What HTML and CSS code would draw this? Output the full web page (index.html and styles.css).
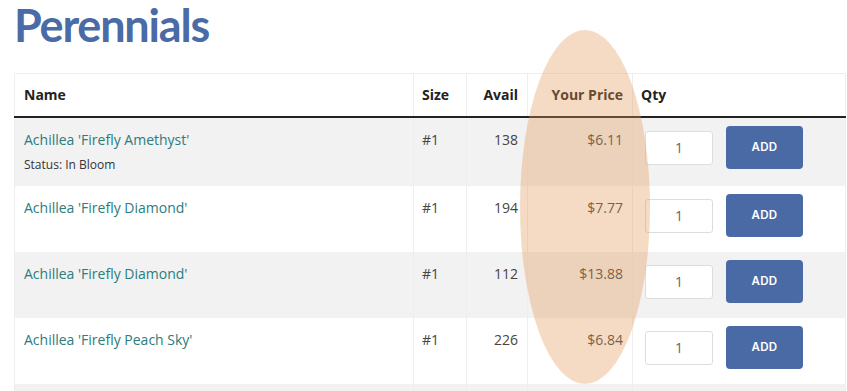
FILE: index.html
```html
<!DOCTYPE html>
<html>
<head>
<meta charset="utf-8">
<link rel="stylesheet" href="styles.css">
</head>
<body>
<div class="page">
  <h1 class="title">Perennials</h1>
  <div class="table-wrap">
    <table class="products">
      <colgroup>
        <col class="w-name">
        <col class="w-size">
        <col class="w-avail">
        <col class="w-price">
        <col class="w-qty">
      </colgroup>
      <thead>
        <tr>
          <th>Name</th>
          <th class="c-size">Size</th>
          <th class="num">Avail</th>
          <th class="num">Your Price</th>
          <th class="c-qty">Qty</th>
        </tr>
      </thead>
      <tbody>
        <tr class="first">
          <td><a href="#" class="plant">Achillea 'Firefly Amethyst'</a><div class="status">Status: In Bloom</div></td>
          <td class="c-size">#1</td>
          <td class="num">138</td>
          <td class="num">$6.11</td>
          <td class="qty"><div class="qty-box"><input class="qty-input" type="text" value="1"><button class="add">ADD</button></div></td>
        </tr>
        <tr>
          <td><a href="#" class="plant">Achillea 'Firefly Diamond'</a></td>
          <td class="c-size">#1</td>
          <td class="num">194</td>
          <td class="num">$7.77</td>
          <td class="qty"><div class="qty-box"><input class="qty-input" type="text" value="1"><button class="add">ADD</button></div></td>
        </tr>
        <tr>
          <td><a href="#" class="plant">Achillea 'Firefly Diamond'</a></td>
          <td class="c-size">#1</td>
          <td class="num">112</td>
          <td class="num">$13.88</td>
          <td class="qty"><div class="qty-box"><input class="qty-input" type="text" value="1"><button class="add">ADD</button></div></td>
        </tr>
        <tr>
          <td><a href="#" class="plant">Achillea 'Firefly Peach Sky'</a></td>
          <td class="c-size">#1</td>
          <td class="num">226</td>
          <td class="num">$6.84</td>
          <td class="qty"><div class="qty-box"><input class="qty-input" type="text" value="1"><button class="add">ADD</button></div></td>
        </tr>
        <tr class="last">
          <td></td>
          <td></td>
          <td></td>
          <td></td>
          <td></td>
        </tr>
      </tbody>
    </table>
    <div class="highlight"></div>
  </div>
</div>
</body>
</html>
```
FILE: styles.css
```css
html, body {
  margin: 0;
  padding: 0;
  background: #fff;
  overflow: hidden;
}
.page {
  padding: 0 2px 0 14px;
  font-family: "Open Sans", "Liberation Sans", sans-serif;
  color: #333;
}
.title {
  margin: 0;
  height: 71px;
  padding-top: 2px;
  font-family: Lato, "Open Sans", sans-serif;
  font-weight: 700;
  font-size: 45px;
  line-height: 46px;
  letter-spacing: -1.2px;
  color: #4a6ba6;
}
.table-wrap {
  position: relative;
}
.products {
  width: 831px;
  table-layout: fixed;
  border-collapse: collapse;
  font-size: 14px;
  background: #fff;
}
.w-name { width: 399px; }
.w-size { width: 53px; }
.w-avail { width: 61px; }
.w-price { width: 105px; }
.w-qty { width: 213px; }
.products th {
  height: 43px;
  box-sizing: border-box;
  padding: 0 9px;
  text-align: left;
  font-weight: 700;
  font-size: 14px;
  color: #222;
  white-space: nowrap;
  border-top: 1px solid #eee;
  border-left: 1px solid #eee;
  border-right: 1px solid #eee;
  border-bottom: 2px solid #222;
}
.products th.num { text-align: right; }
.products th.c-size { padding-left: 8px; }
.products th.c-qty { padding-left: 8px; }
.products td {
  vertical-align: top;
  padding: 12px 9px 0;
  line-height: 20px;
  color: #444;
  white-space: nowrap;
  border-left: 1px solid #eee;
  border-right: 1px solid #eee;
}
.products td.c-size { padding-left: 8px; }
.products tbody tr { height: 66px; }
.products tbody tr.first { height: 69px; }
.products tbody tr.last { height: 10px; }
.products tbody tr:nth-child(odd) td { background: #f2f2f2; }
.products td.num { text-align: right; }
.plant {
  color: #2b7c7c;
  text-decoration: none;
}
.status {
  font-size: 12px;
  line-height: 18px;
  margin-top: 6px;
  color: #333;
}
.products td.qty {
  padding: 8px 12px 0;
}
.qty-box {
  display: flex;
  align-items: flex-start;
  gap: 13px;
}
.qty-input {
  box-sizing: border-box;
  width: 68px;
  height: 34px;
  margin-top: 5px;
  border: 1px solid #ddd;
  border-radius: 3px;
  text-align: center;
  font-family: "Open Sans", sans-serif;
  font-size: 14px;
  color: #666;
  -webkit-text-fill-color: #666;
  background: #fff;
  padding: 0;
  outline: none;
}
.add {
  width: 77px;
  height: 43px;
  border: 0;
  border-radius: 4px;
  background: #4a6aa5;
  color: #fff;
  font-family: Inter, "DejaVu Sans", sans-serif;
  font-weight: 600;
  font-size: 11.5px;
  letter-spacing: 0.3px;
  cursor: pointer;
}
.highlight {
  position: absolute;
  left: 506px;
  top: -43px;
  width: 130px;
  height: 354px;
  border-radius: 50%;
  background: rgba(226, 152, 84, 0.35);
  pointer-events: none;
}
```
